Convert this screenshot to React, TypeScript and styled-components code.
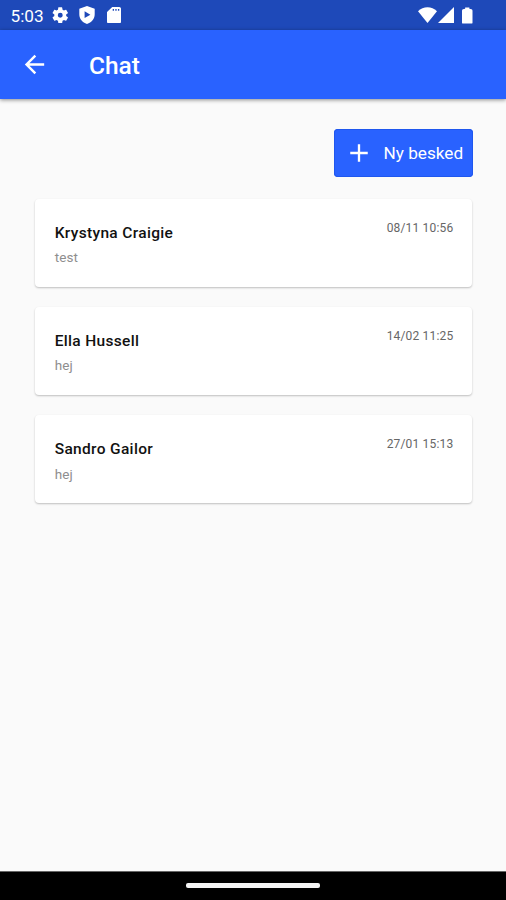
import React from "react";
import styled, { createGlobalStyle } from "styled-components";

const GlobalStyle = createGlobalStyle`
  * { box-sizing: border-box; }
  body { margin: 0; font-family: Roboto, "Liberation Sans", sans-serif; }
`;

const Screen = styled.div`
  display: flex;
  flex-direction: column;
  width: 506px;
  height: 900px;
  overflow: hidden;
  background: #fafafa;
`;

const StatusBar = styled.div`
  display: flex;
  flex: none;
  align-items: center;
  justify-content: space-between;
  height: 30px;
  padding: 0 33.5px 0 10.5px;
  background: #1e49b9;
  color: #fff;
`;

const StatusGroup = styled.div`
  display: flex;
  align-items: center;
`;

const Clock = styled.span`
  width: 41.5px;
  margin-top: 1px;
  font-size: 17.2px;
  line-height: 20px;
  white-space: nowrap;
`;

const Glyph = styled.svg<{ $w: number; $h: number; $gap?: number }>`
  display: block;
  flex: none;
  width: ${(p) => p.$w}px;
  height: ${(p) => p.$h}px;
  margin-left: ${(p) => p.$gap ?? 0}px;
  fill: currentColor;
`;

const AppBar = styled.header`
  display: flex;
  flex: none;
  align-items: center;
  height: 69px;
  padding-left: 20px;
  background: #2962ff;
  color: #fff;
  box-shadow: 0 1px 4px rgba(0, 0, 0, 0.45);
`;

const IconButton = styled.button`
  display: flex;
  padding: 0;
  border: 0;
  background: none;
  color: inherit;
`;

const Title = styled.h1`
  margin: 2px 0 0 40px;
  font-size: 24.5px;
  font-weight: 500;
  line-height: 30px;
`;

const Content = styled.main`
  display: flex;
  flex: 1;
  flex-direction: column;
  padding: 29.5px 33.6px 0 35.4px;
`;

const NewMessageButton = styled.button`
  display: flex;
  align-items: center;
  align-self: flex-end;
  width: 139px;
  height: 48.5px;
  margin-right: -0.6px;
  padding: 0 0 0 10.5px;
  border: 0;
  border-radius: 4px;
  background: #2962ff;
  color: #fff;
  font: 400 17.2px/22px Roboto, "Liberation Sans", sans-serif;
  white-space: nowrap;
  box-shadow: inset 0 0 0 1px #1f57ee;
`;

const ButtonLabel = styled.span`
  margin: 1px 0 0 11px;
`;

const CardList = styled.div`
  display: flex;
  flex-direction: column;
  gap: 20.4px;
  margin-top: 21.5px;
`;

const Card = styled.article`
  display: flex;
  justify-content: space-between;
  height: 88px;
  padding: 20px 19px 0 19.3px;
  border-radius: 4px;
  background: #fff;
  box-shadow: 0 1px 2px rgba(0, 0, 0, 0.24);
`;

const Name = styled.div`
  margin-top: 4px;
  color: #111;
  font-size: 15.5px;
  font-weight: 500;
  line-height: 20px;
  letter-spacing: 0.33px;
`;

const Preview = styled.div`
  margin-top: 4.5px;
  color: #8e8e8e;
  font-size: 13.5px;
  line-height: 20px;
  letter-spacing: 0.1px;
`;

const Timestamp = styled.time`
  margin-top: 1.1px;
  color: #666;
  font-size: 12px;
  line-height: 17px;
  letter-spacing: 0.18px;
`;

const NavBar = styled.footer`
  display: flex;
  flex: none;
  align-items: center;
  justify-content: center;
  height: 29px;
  border-top: 1px solid #666;
  background: #000;
`;

const HomeHandle = styled.div`
  width: 134px;
  height: 5px;
  margin-bottom: 1px;
  border-radius: 2px;
  background: #f4f4f4;
`;

const messages = [
  { name: "Krystyna Craigie", text: "test", time: "08/11 10:56" },
  { name: "Ella Hussell", text: "hej", time: "14/02 11:25" },
  { name: "Sandro Gailor", text: "hej", time: "27/01 15:13" },
];

export default function App() {
  return (
    <Screen>
      <GlobalStyle />
      <StatusBar>
        <StatusGroup>
          <Clock>5:03</Clock>
          <Glyph $w={16.5} $h={16.5} viewBox="2 2 20 20">
            <path d="M19.14 12.94c.04-.3.06-.61.06-.94 0-.32-.02-.64-.07-.94l2.03-1.58a.49.49 0 0 0 .12-.61l-1.92-3.32a.488.488 0 0 0-.59-.22l-2.39.96c-.5-.38-1.03-.7-1.62-.94l-.36-2.54a.484.484 0 0 0-.48-.41h-3.84c-.24 0-.43.17-.47.41l-.36 2.54c-.59.24-1.13.57-1.62.94l-2.39-.96c-.22-.08-.47 0-.59.22L2.74 8.87c-.12.21-.08.47.12.61l2.03 1.58c-.05.3-.09.63-.09.94s.02.64.07.94l-2.03 1.58a.49.49 0 0 0-.12.61l1.92 3.32c.12.22.37.29.59.22l2.39-.96c.5.38 1.03.7 1.62.94l.36 2.54c.05.24.24.41.48.41h3.84c.24 0 .44-.17.47-.41l.36-2.54c.59-.24 1.13-.56 1.62-.94l2.39.96c.22.08.47 0 .59-.22l1.92-3.32c.12-.22.07-.47-.12-.61l-2.01-1.58zM12 15A3 3 0 1 1 12 9a3 3 0 0 1 0 6z" />
          </Glyph>
          <Glyph $w={16} $h={18} $gap={10.5} viewBox="0 0 16 18">
            <path
              fillRule="evenodd"
              d="M8 0 15.7 2.7v5.5c0 4.6-3.1 8.2-7.7 9.7C3.4 16.4.3 12.8.3 8.2V2.7zM5.6 5.3v6.8L11.4 8.7z"
            />
          </Glyph>
          <Glyph $w={14} $h={16.5} $gap={12} viewBox="4 2 16 20" preserveAspectRatio="none">
            <path d="M18 2h-8L4 8v12c0 1.1.9 2 2 2h12c1.1 0 2-.9 2-2V4c0-1.1-.9-2-2-2zm-6 4.500h-1.500V4.500H12v2zm3 0h-1.500V4.500H15v2zm3 0h-1.500V4.500H18v2z" />
          </Glyph>
        </StatusGroup>
        <StatusGroup>
          <Glyph $w={19} $h={16} viewBox="0 0 19 16">
            <path d="M0 4.3C5.2-1.1 13.8-1.1 19 4.3L9.5 16z" />
          </Glyph>
          <Glyph $w={16} $h={16} $gap={1} viewBox="0 0 16 16">
            <path d="M16 0v16H0z" />
          </Glyph>
          <Glyph $w={10.5} $h={17} $gap={8} viewBox="0 0 11 17">
            <path d="M3.3 0h4.4v1.4L10 2q1 .4 1 1.5V16c0 .6-.4 1-1 1H1c-.6 0-1-.4-1-1V3.5Q0 2.4 1 2l2.300-.6z" />
          </Glyph>
        </StatusGroup>
      </StatusBar>
      <AppBar>
        <IconButton aria-label="Tilbage">
          <Glyph $w={29} $h={29} viewBox="0 0 24 24">
            <path d="M20 11H7.830l5.590-5.590L12 4l-8 8 8 8 1.410-1.410L7.830 13H20v-2z" />
          </Glyph>
        </IconButton>
        <Title>Chat</Title>
      </AppBar>
      <Content>
        <NewMessageButton>
          <Glyph $w={28} $h={28} viewBox="0 0 24 24">
            <path d="M19.500 13h-6.500v6.500h-2v-6.500H4.500v-2h6.500V4.500h2v6.500h6.500z" />
          </Glyph>
          <ButtonLabel>Ny besked</ButtonLabel>
        </NewMessageButton>
        <CardList>
          {messages.map((m) => (
            <Card key={m.name}>
              <div>
                <Name>{m.name}</Name>
                <Preview>{m.text}</Preview>
              </div>
              <Timestamp>{m.time}</Timestamp>
            </Card>
          ))}
        </CardList>
      </Content>
      <NavBar>
        <HomeHandle />
      </NavBar>
    </Screen>
  );
}
